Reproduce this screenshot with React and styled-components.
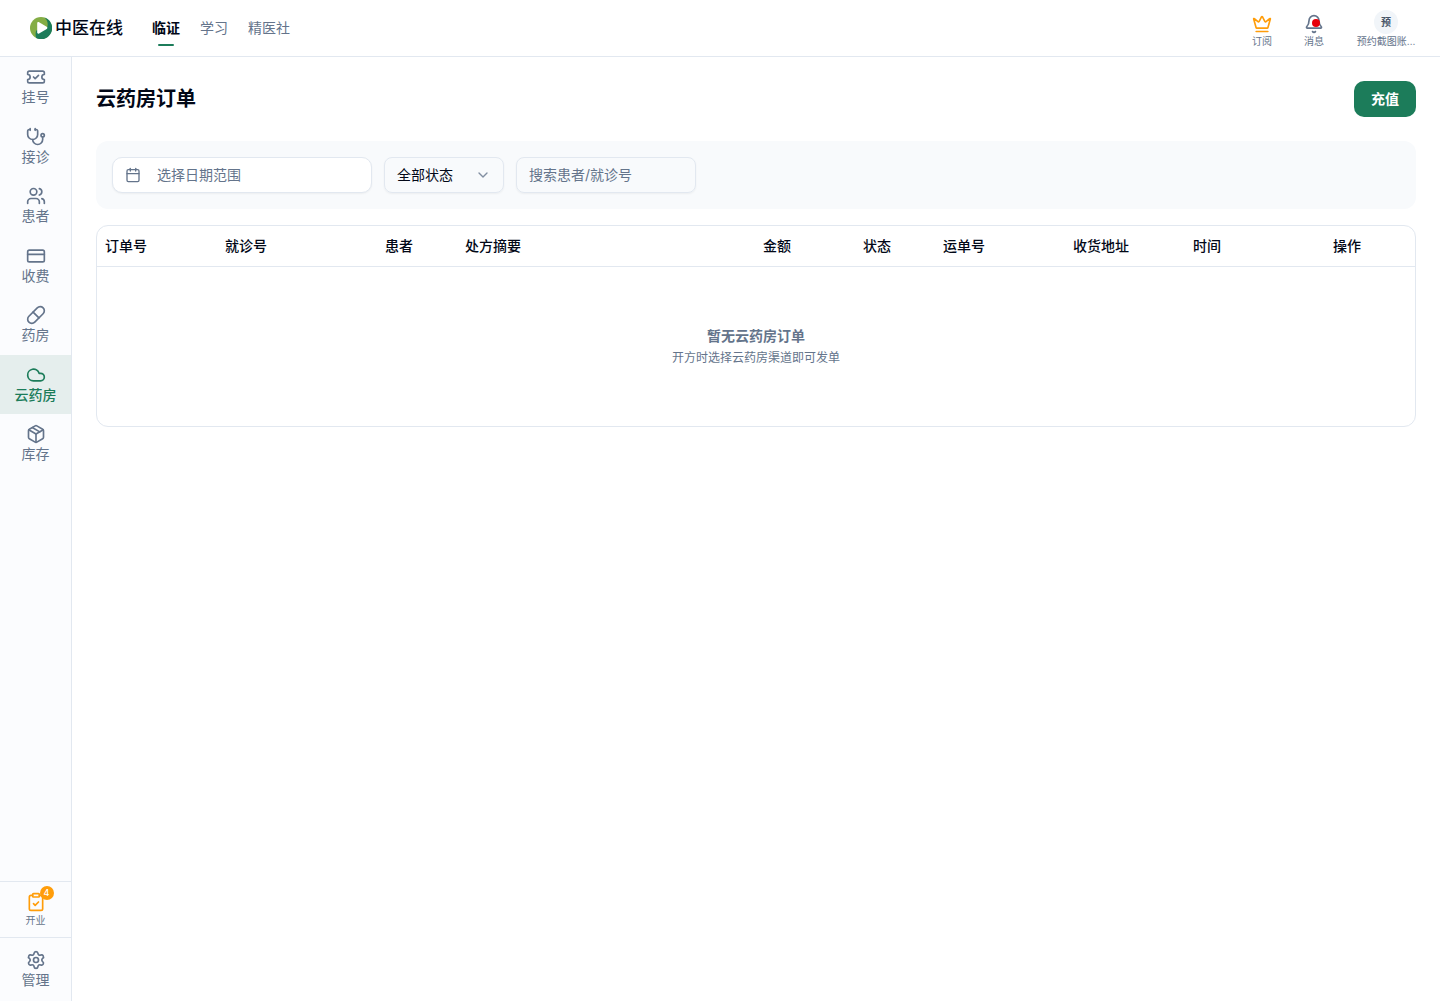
import React from "react";
import styled, { createGlobalStyle } from "styled-components";
import {
  Bell,
  Calendar,
  ChevronDown,
  ClipboardCheck,
  Cloud,
  CreditCard,
  Crown,
  Package,
  Pill,
  Settings,
  Stethoscope,
  TicketCheck,
  Users,
} from "lucide-react";

const colors = {
  ink: "#020817",
  muted: "#64748b",
  line: "#e2e8f0",
  soft: "#f8fafc",
  green: "#1c7c5a",
  amber: "#ff9d0a",
};

const topLinks = ["临证", "学习", "精医社"];

const sideLinks = [
  { label: "挂号", icon: TicketCheck },
  { label: "接诊", icon: Stethoscope },
  { label: "患者", icon: Users },
  { label: "收费", icon: CreditCard },
  { label: "药房", icon: Pill },
  { label: "云药房", icon: Cloud },
  { label: "库存", icon: Package },
];

const columns = [
  { label: "订单号", width: 120 },
  { label: "就诊号", width: 160 },
  { label: "患者", width: 80 },
  { label: "处方摘要" },
  { label: "金额", width: 100 },
  { label: "状态", width: 80 },
  { label: "运单号", width: 130 },
  { label: "收货地址", width: 120 },
  { label: "时间", width: 140 },
  { label: "操作", width: 90 },
];

function LogoMark() {
  return (
    <svg width="22" height="22" viewBox="0 0 22 22" aria-hidden="true">
      <circle cx="11" cy="11" r="11" fill="#84ad45" />
      <path
        d="M14.500.6A11 11 0 1 1 6.200 20.900C5.400 18.500 5.400 16 6.200 13.500L17 11C18.500 7 17.500 3 14.500.6Z"
        fill={colors.green}
      />
      <path
        d="M7.200 6.200c0-1 1-1.500 1.900-1l7.600 4.500c.9.500.9 1.700 0 2.200l-7.600 4.700c-.9.500-1.900 0-1.900-1Z"
        fill="#fff"
      />
    </svg>
  );
}

function App() {
  return (
    <>
      <GlobalStyle />
      <Page>
        <Header>
          <Brand href="#">
            <LogoMark />
            中医在线
          </Brand>
          <TopNav>
            {topLinks.map((label, i) => (
              <TopLink key={label} href="#" $active={i === 0}>
                {label}
              </TopLink>
            ))}
          </TopNav>
          <Actions>
            <Action type="button">
              <Crown size={20} color={colors.amber} />
              订阅
            </Action>
            <Action type="button">
              <IconWrap>
                <Bell size={20} />
                <Dot />
              </IconWrap>
              消息
            </Action>
            <Account type="button">
              <Avatar>预</Avatar>
              预约截图账…
            </Account>
          </Actions>
        </Header>

        <Body>
          <Sidebar>
            <SideNav>
              {sideLinks.map(({ label, icon: Icon }) => (
                <SideLink key={label} href="#" $active={label === "云药房"}>
                  <Icon size={20} />
                  {label}
                </SideLink>
              ))}
            </SideNav>
            <Opening type="button">
              <IconWrap>
                <ClipboardCheck size={20} color={colors.amber} />
                <Badge>4</Badge>
              </IconWrap>
              开业
            </Opening>
            <Manage>
              <SideLink href="#">
                <Settings size={20} />
                管理
              </SideLink>
            </Manage>
          </Sidebar>

          <Main>
            <TitleRow>
              <Title>云药房订单</Title>
              <Primary type="button">充值</Primary>
            </TitleRow>

            <Filters>
              <DateButton type="button">
                <Calendar size={16} />
                选择日期范围
              </DateButton>
              <SelectBox>
                <Select aria-label="订单状态" defaultValue="all">
                  <option value="all">全部状态</option>
                </Select>
                <ChevronDown size={16} />
              </SelectBox>
              <Search
                type="text"
                aria-label="搜索患者/就诊号"
                placeholder="搜索患者/就诊号"
              />
            </Filters>

            <Card>
              <Table>
                <colgroup>
                  {columns.map((col) => (
                    <col key={col.label} width={col.width} />
                  ))}
                </colgroup>
                <thead>
                  <tr>
                    {columns.map((col) => (
                      <Th key={col.label}>{col.label}</Th>
                    ))}
                  </tr>
                </thead>
                <tbody>
                  <tr>
                    <Empty colSpan={columns.length}>
                      <EmptyTitle>暂无云药房订单</EmptyTitle>
                      <EmptyHint>开方时选择云药房渠道即可发单</EmptyHint>
                    </Empty>
                  </tr>
                </tbody>
              </Table>
            </Card>
          </Main>
        </Body>
      </Page>
    </>
  );
}

const GlobalStyle = createGlobalStyle`
  *, *::before, *::after {
    box-sizing: border-box;
  }

  body {
    margin: 0;
    background: #fff;
    color: ${colors.ink};
    font-family: Inter, "Noto Sans CJK SC", sans-serif;
    font-size: 14px;
    line-height: 20px;
  }

  button, input, select {
    font: inherit;
    color: inherit;
  }

  button {
    padding: 0;
    border: 0;
    background: none;
    cursor: pointer;
  }

  a {
    color: inherit;
    text-decoration: none;
  }

  svg {
    display: block;
    flex-shrink: 0;
  }
`;

const Page = styled.div`
  display: flex;
  flex-direction: column;
  min-height: 100vh;
`;

const Header = styled.header`
  display: flex;
  align-items: center;
  height: 57px;
  padding: 0 24px 0 30px;
  border-bottom: 1px solid ${colors.line};
`;

const Brand = styled.a`
  display: flex;
  align-items: center;
  gap: 3px;
  font-size: 17px;
  font-weight: 500;
`;

const TopNav = styled.nav`
  display: flex;
  gap: 20px;
  margin-left: 29px;
`;

const TopLink = styled.a`
  display: flex;
  flex-direction: column;
  align-items: center;
  gap: 6px;
  padding-top: 8px;
  color: ${(p) => (p.$active ? colors.ink : colors.muted)};
  font-weight: ${(p) => (p.$active ? 600 : 400)};

  &::after {
    content: "";
    width: 16px;
    height: 2px;
    border-radius: 1px;
    background: ${(p) => (p.$active ? colors.green : "transparent")};
  }
`;

const Actions = styled.div`
  display: flex;
  align-items: flex-end;
  gap: 32px;
  margin-left: auto;
`;

const Action = styled.button`
  display: flex;
  flex-direction: column;
  align-items: center;
  gap: 1px;
  color: ${colors.muted};
  font-size: 10px;
  line-height: 12px;
  white-space: nowrap;
`;

const IconWrap = styled.span`
  position: relative;
`;

const Dot = styled.span`
  position: absolute;
  top: 5px;
  right: 4px;
  width: 8px;
  height: 8px;
  border-radius: 50%;
  background: #e7000b;
`;

const Badge = styled.span`
  position: absolute;
  top: -6px;
  right: -8px;
  width: 14px;
  height: 14px;
  border-radius: 50%;
  background: ${colors.amber};
  color: #fff;
  font-size: 9px;
  font-weight: 500;
  line-height: 14px;
  text-align: center;
`;

const Account = styled(Action)`
  width: 60px;
`;

const Avatar = styled.span`
  width: 24px;
  height: 24px;
  border-radius: 50%;
  background: #f1f5f9;
  color: #475569;
  font-weight: 600;
  line-height: 24px;
`;

const Body = styled.div`
  display: flex;
  flex: 1;
`;

const Sidebar = styled.aside`
  display: flex;
  flex-direction: column;
  flex-shrink: 0;
  width: 72px;
  border-right: 1px solid ${colors.line};
  background: #fbfcfe;
`;

const SideNav = styled.nav`
  display: grid;
  grid-auto-rows: 1fr;
  height: 417px;
  margin-bottom: auto;
`;

const SideLink = styled.a`
  display: flex;
  flex-direction: column;
  align-items: center;
  padding-top: 10px;
  background: ${(p) => (p.$active ? "#e5eeed" : "transparent")};
  color: ${(p) => (p.$active ? colors.green : colors.muted)};
  font-weight: ${(p) => (p.$active ? 500 : 400)};
`;

const Opening = styled.button`
  display: flex;
  flex-direction: column;
  align-items: center;
  justify-content: center;
  gap: 1px;
  height: 56px;
  border-top: 1px solid ${colors.line};
  color: ${colors.muted};
  font-size: 10px;
  line-height: 14px;
`;

const Manage = styled.div`
  height: 64px;
  padding-top: 2px;
  border-top: 1px solid ${colors.line};
`;

const Main = styled.main`
  display: flex;
  flex: 1;
  flex-direction: column;
  min-width: 0;
  padding: 24px;
`;

const TitleRow = styled.div`
  display: flex;
  align-items: center;
  justify-content: space-between;
  margin-bottom: 24px;
`;

const Title = styled.h1`
  margin: 0;
  font-size: 20px;
  font-weight: 600;
  line-height: 30px;
`;

const Primary = styled.button`
  width: 62px;
  height: 36px;
  border-radius: 10px;
  background: ${colors.green};
  color: #fff;
  font-weight: 600;
`;

const Filters = styled.div`
  display: flex;
  flex-wrap: wrap;
  gap: 12px;
  margin-bottom: 16px;
  padding: 16px;
  border-radius: 12px;
  background: ${colors.soft};
`;

const DateButton = styled.button`
  display: flex;
  align-items: center;
  gap: 16px;
  width: 260px;
  height: 36px;
  padding: 0 12px;
  border: 1px solid ${colors.line};
  border-radius: 10px;
  background: #fff;
  box-shadow: 0 1px 2px rgba(0, 0, 0, 0.05);
  color: ${colors.muted};
`;

const SelectBox = styled.div`
  display: grid;
  align-items: center;
  width: 120px;
  height: 36px;
  border: 1px solid ${colors.line};
  border-radius: 8px;
  box-shadow: 0 1px 2px rgba(0, 0, 0, 0.05);

  & > * {
    grid-area: 1 / 1;
  }

  svg {
    justify-self: end;
    margin-right: 12px;
    color: ${colors.muted};
    opacity: 0.8;
    pointer-events: none;
  }
`;

const Select = styled.select`
  width: 100%;
  height: 34px;
  padding: 0 12px;
  border: 0;
  background: transparent;
  appearance: none;
`;

const Search = styled.input`
  width: 180px;
  height: 36px;
  padding: 0 12px 2px;
  border: 1px solid ${colors.line};
  border-radius: 8px;
  background: transparent;
  box-shadow: 0 1px 2px rgba(0, 0, 0, 0.05);

  &::placeholder {
    color: ${colors.muted};
  }
`;

const Card = styled.section`
  overflow: hidden;
  border: 1px solid ${colors.line};
  border-radius: 12px;
`;

const Table = styled.table`
  width: 100%;
  border-spacing: 0;
  table-layout: fixed;
`;

const Th = styled.th`
  height: 41px;
  padding: 0 8px;
  border-bottom: 1px solid ${colors.line};
  font-weight: 500;
  text-align: left;
`;

const Empty = styled.td`
  height: 159px;
  padding: 0 8px 2px;
  color: ${colors.muted};
  text-align: center;
`;

const EmptyTitle = styled.p`
  margin: 0 0 4px;
  font-weight: 600;
`;

const EmptyHint = styled.p`
  margin: 0;
  font-size: 12px;
  line-height: 16px;
`;

export default App;
